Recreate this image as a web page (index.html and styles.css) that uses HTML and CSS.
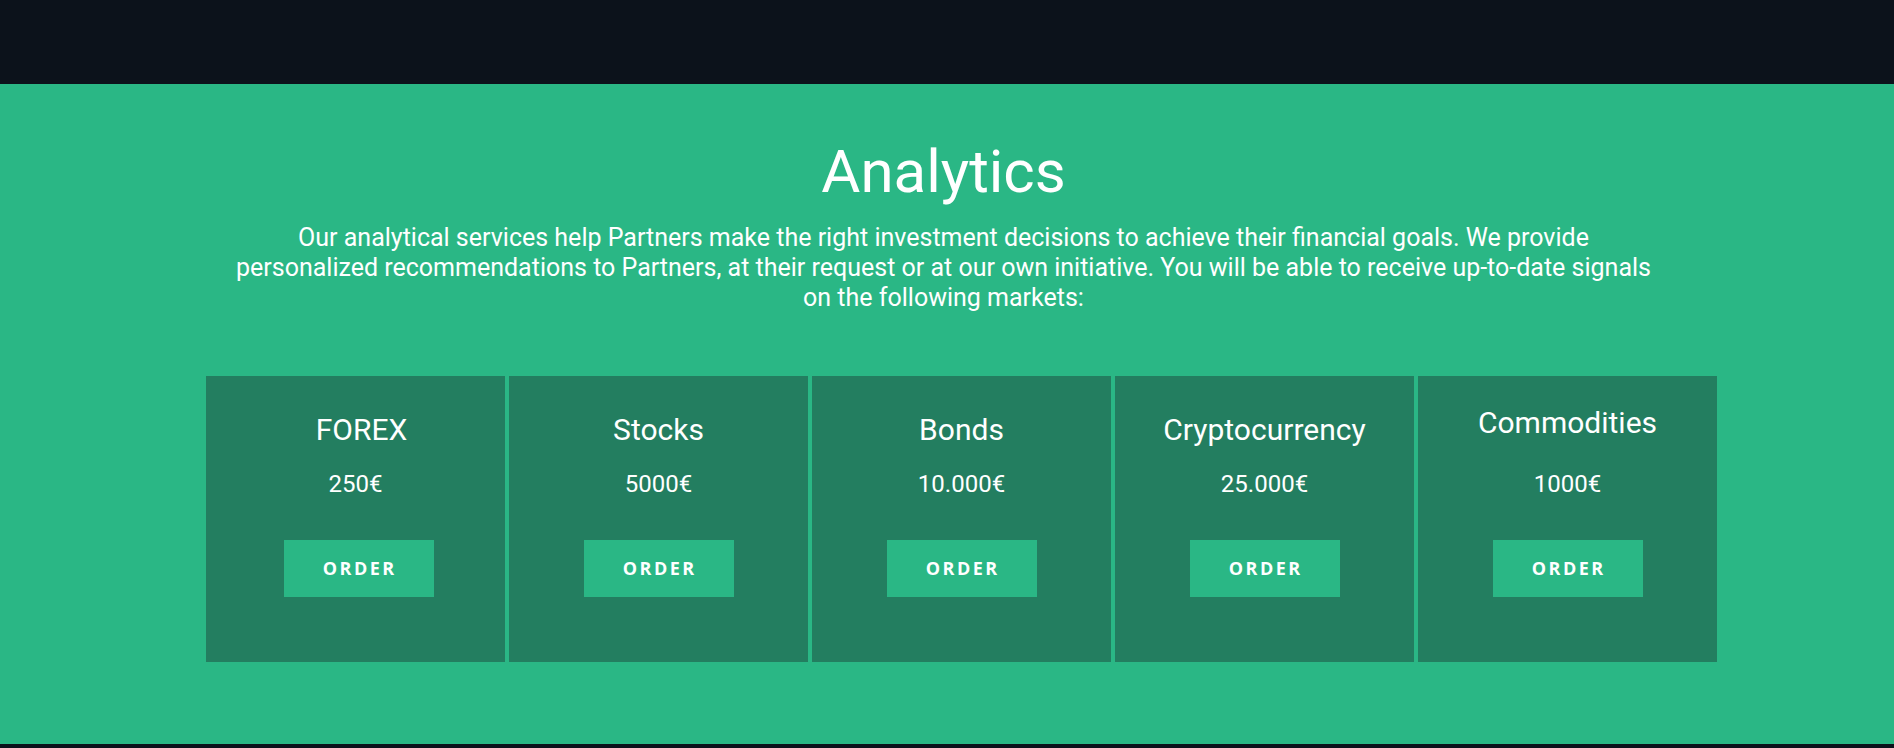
FILE: index.html
```html
<!DOCTYPE html>
<html lang="en">
<head>
<meta charset="utf-8">
<title>Analytics</title>
<link rel="stylesheet" href="styles.css">
</head>
<body>
<header class="topbar"></header>
<section class="analytics">
  <h1 class="analytics-title">Analytics</h1>
  <p class="analytics-lead">Our analytical services help Partners make the right investment decisions to achieve their financial goals. We provide personalized recommendations to Partners, at their request or at our own initiative. You will be able to receive up-to-date signals on the following markets:</p>
  <div class="cards">
    <div class="card card--first">
      <h2 class="card-title">FOREX</h2>
      <div class="card-price">250€</div>
      <a class="card-btn" href="#">ORDER</a>
    </div>
    <div class="card">
      <h2 class="card-title">Stocks</h2>
      <div class="card-price">5000€</div>
      <a class="card-btn" href="#">ORDER</a>
    </div>
    <div class="card">
      <h2 class="card-title">Bonds</h2>
      <div class="card-price">10.000€</div>
      <a class="card-btn" href="#">ORDER</a>
    </div>
    <div class="card">
      <h2 class="card-title">Cryptocurrency</h2>
      <div class="card-price">25.000€</div>
      <a class="card-btn" href="#">ORDER</a>
    </div>
    <div class="card">
      <h2 class="card-title card-title--raised">Commodities</h2>
      <div class="card-price">1000€</div>
      <a class="card-btn" href="#">ORDER</a>
    </div>
  </div>
</section>
<footer class="bottombar"></footer>
</body>
</html>
```
FILE: styles.css
```css
html, body {
  margin: 0;
  padding: 0;
  background: #0c121b;
}

body {
  font-family: Roboto, "Liberation Sans", sans-serif;
  color: #ffffff;
}

.topbar {
  height: 84px;
  background: #0c121b;
}

.analytics {
  background: #2ab785;
  height: 660px;
  box-sizing: border-box;
  padding-top: 52px;
  overflow: hidden;
}

.analytics-title {
  margin: 0;
  font-size: 60px;
  line-height: 72px;
  font-weight: 400;
  text-align: center;
  padding-right: 7px;
}

.analytics-lead {
  width: 1424px;
  margin: 15px auto 0;
  padding-right: 7px;
  font-size: 25px;
  line-height: 30px;
  text-align: center;
}

.cards {
  display: flex;
  gap: 4px;
  margin: 63px 0 0 206px;
}

.card {
  width: 299px;
  height: 286px;
  box-sizing: border-box;
  background: #237e60;
  display: flex;
  flex-direction: column;
  align-items: center;
  padding-top: 36px;
}

.card-title {
  margin: 0;
  font-size: 30px;
  line-height: 36px;
  font-weight: 400;
}

.card-title--raised {
  margin: -7px 0 7px;
}

.card-price {
  margin-top: 21px;
  font-size: 24px;
  line-height: 30px;
}

.card-btn {
  margin-top: 41px;
  width: 150px;
  height: 57px;
  line-height: 57px;
  background: #2ab785;
  color: #ffffff;
  text-align: center;
  text-decoration: none;
  font-family: "Open Sans", "Liberation Sans", sans-serif;
  font-weight: 700;
  font-size: 18px;
  letter-spacing: 2.5px;
  padding-left: 2.5px;
  box-sizing: border-box;
}

.card--first .card-title {
  margin-left: 12px;
}

.card--first .card-btn {
  margin-left: 6px;
}

.bottombar {
  height: 10px;
  background: #0c121b;
}
```
